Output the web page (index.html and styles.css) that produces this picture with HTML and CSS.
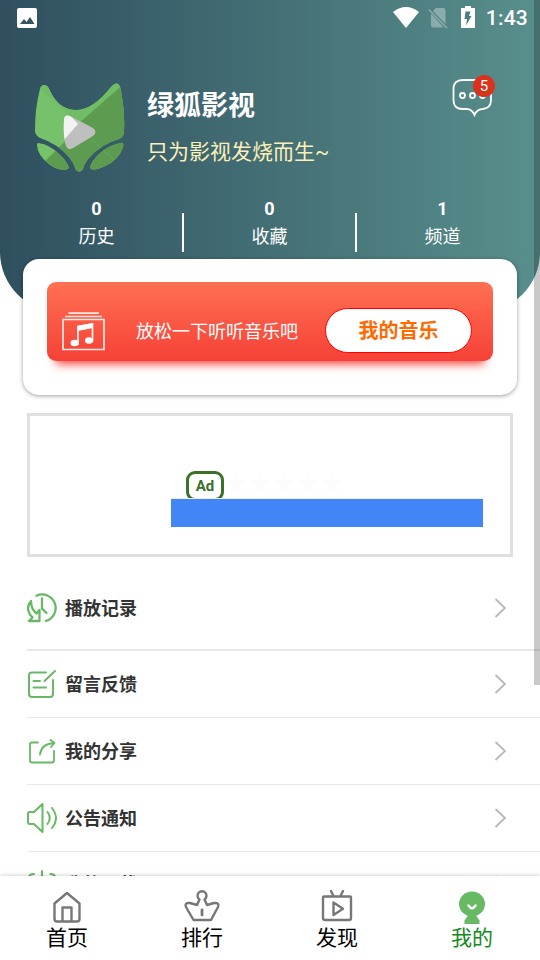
FILE: index.html
```html
<!DOCTYPE html>
<html lang="zh-CN">
<head>
<meta charset="utf-8">
<title>绿狐影视</title>
<link rel="stylesheet" href="styles.css">
</head>
<body>
<div class="app">
  <main class="content">
    <header class="hero">
      <div class="status">
        <svg class="status-pic" width="20" height="20" viewBox="0 0 20 20"><rect width="20" height="20" rx="2" fill="#fff"/><path d="M3 16l4-5 2.500 3 3.500-5 4.500 7z" fill="#35565f"/></svg>
        <svg class="wifi" width="26" height="21" viewBox="0 0 26 21"><path d="M0 5Q13-5 26 5L13 21Z" fill="#fff"/></svg>
        <svg class="sim" width="20" height="21" viewBox="0 0 20 21"><path d="M7.500 0H15.500Q17.500 0 17.500 2V16L5 3ZM3 5.500L15.500 19.500H5q-2 0-2-2z" fill="#fff"/><path d="M.8 1.500L19 20.300" stroke="#fff" stroke-width="1.600"/></svg>
        <svg class="battery" width="14" height="22" viewBox="0 0 14 22"><path d="M4 0h6v2h4v20H0V2h4z" fill="#fff"/><path d="M9.500 5.500H4.500L3.500 13H6L5 19.500L10.500 10H8z" fill="#4b7d80"/></svg>
        <span class="clock">1:43</span>
      </div>
      <div class="profile">
        <svg class="logo" width="90" height="90" viewBox="0 0 90 90">
          <defs>
            <clipPath id="fox"><path d="M5 6Q6 2 9.500 2Q13 2 15 8Q24 27 41 27Q58 27 76 4Q79 0 82 .5Q85 1 86 8Q90 28 89 48Q89 54 84 56Q66 61 54 75Q49 81 48 86Q45 91 41 87Q39 80 34 74Q23 61 5 55Q0 52 0 48Q0 24 5 6ZM3 60Q14 61 24 71Q32 78 34 85Q28 90 15 82Q2 72 2 62Q2 60 3 60ZM86 60Q89 59 88 64Q84 77 70 83Q58 89 55 85Q55 80 64 71Q74 62 86 60Z"/></clipPath>
            <clipPath id="play"><path d="M29 37Q29 31 35 33L58 45Q63 49 58 53L38 65Q33 68 31 63Q28 53 29 37Z"/></clipPath>
          </defs>
          <g clip-path="url(#fox)"><path fill="#76c26b" d="M0 0h90v90H0z"/><path fill="#5d9b51" d="M90 0L8 80L18 90H90Z"/><path d="M5 6L43 42L90 0H0z" fill="#70bd66"/><path fill="#5d9b51" d="M84 5L42 42L90 90V0Z"/><path d="M5 6L90 88" stroke="#7bc56d" stroke-opacity=".35" fill="none"/></g>
          <g clip-path="url(#play)"><path fill="#bfbfbf" d="M28 30h35v40H28z"/><path fill="#f3f3f3" d="M28 30h5l10 11-15 17z"/></g>
        </svg>
        <div class="names"><h1>绿狐影视</h1><p>只为影视发烧而生~</p></div>
        <div class="message">
          <svg width="40" height="38" viewBox="0 0 40 38" fill="none" stroke="#fff" stroke-width="1.800"><path d="M10.500 1H30.500Q39 1 39 10V21Q39 29 31 30Q25 30 22.500 36Q20 30 14.500 30H10.500Q1.500 30 1.500 21V10Q1.500 1 10.500 1Z"/><circle cx="10.500" cy="16.500" r="2.500"/><circle cx="20.500" cy="16.500" r="2.500"/><circle cx="30.500" cy="16.500" r="2.500"/></svg>
          <span class="badge">5</span>
        </div>
      </div>
      <div class="stats">
        <div class="stat"><b>0</b><span>历史</span></div>
        <i></i>
        <div class="stat"><b>0</b><span>收藏</span></div>
        <i></i>
        <div class="stat"><b>1</b><span>频道</span></div>
      </div>
    </header>
    <section class="card">
      <div class="music">
        <svg width="43" height="39" viewBox="0 0 43 39" fill="none" stroke="#ffe9e5" stroke-width="1.700"><path d="M6.500 1.200H37M3 4.500H40M1 7.500H42V37.500H1Z"/><path d="M16 33V14.500L30.500 12V30" stroke="#fff" stroke-width="1.600"/><path d="M15.500 14L31 11v5l-15.500 3z" fill="#fff" stroke="none"/><ellipse cx="12.500" cy="31" rx="4" ry="3.200" fill="#fff" stroke="none"/><ellipse cx="27" cy="28.500" rx="4" ry="3.200" fill="#fff" stroke="none"/></svg>
        <span class="music-text">放松一下听听音乐吧</span>
        <button>我的音乐</button>
      </div>
    </section>
    <section class="ad">
      <div class="ad-line">
        <span class="ad-tag">Ad</span>
        <svg class="stars" width="120" height="24" viewBox="0 0 120 24"><defs><path id="star" d="M12 2.500l2.300 6.600 7 .2-5.500 4.200 2 6.700-5.800-4-5.800 4 2-6.700-5.500-4.200 7-.2z"/></defs><use href="#star"/><use href="#star" x="24"/><use href="#star" x="48"/><use href="#star" x="72"/><use href="#star" x="96"/></svg>
      </div>
      <div class="ad-bar"></div>
    </section>
    <ul class="menu">
      <li class="first">
        <svg width="30" height="32" viewBox="0 0 30 32" fill="none" stroke="#67b963" stroke-width="2.300"><path d="M9.500 3.700A13.500 13.500 0 1 1 19 28.900" stroke-linecap="round"/><path d="M15 6.500v10l4.500 4.500" stroke-linecap="round"/><path d="M4 9Q0 14 1.500 19Q2.500 23 5.500 25.500L2 29H12.500V18L9.500 21.500Q4 17 4 9Z" stroke-linejoin="round"/></svg>
        <span>播放记录</span><svg class="chev" width="12" height="20" viewBox="0 0 12 20"><path d="M1.500 1l9.500 9L1.500 19"/></svg>
      </li>
      <li>
        <svg width="30" height="32" viewBox="0 0 30 32" fill="none" stroke="#67b963" stroke-width="2" stroke-linecap="round"><path d="M19 4.500H5Q2 4.500 2 7.500V26Q2 29 5 29H23Q26 29 26 26V12M17.500 13L28 3M6.500 13H13M6.500 19.500H19"/></svg>
        <span>留言反馈</span><svg class="chev" width="12" height="20" viewBox="0 0 12 20"><path d="M1.500 1l9.500 9L1.500 19"/></svg>
      </li>
      <li>
        <svg width="30" height="32" viewBox="0 0 30 32" fill="none" stroke="#67b963" stroke-width="1.800" stroke-linecap="round" stroke-linejoin="round"><path d="M11 7.500H5Q3 7.500 3 9.500V25.500Q3 27.500 5 27.500H25Q27 27.500 27 25.500V16M13 19.500Q14 9 27 8M23.500 5L27.500 8L24 12"/></svg>
        <span>我的分享</span><svg class="chev" width="12" height="20" viewBox="0 0 12 20"><path d="M1.500 1l9.500 9L1.500 19"/></svg>
      </li>
      <li>
        <svg width="30" height="32" viewBox="0 0 30 32" fill="none" stroke="#67b963" stroke-width="2" stroke-linecap="round" stroke-linejoin="round"><path d="M15.500 2L7 10H3Q1 10 1 12V20Q1 22 3 22H7L15.500 30ZM20.500 10Q25 16 20.500 22M25 6Q33 16 25 26"/></svg>
        <span>公告通知</span><svg class="chev" width="12" height="20" viewBox="0 0 12 20"><path d="M1.500 1l9.500 9L1.500 19"/></svg>
      </li>
      <li class="last">
        <svg width="30" height="32" viewBox="0 0 30 32" fill="none" stroke="#67b963" stroke-width="2" stroke-linecap="round"><path d="M15 2V20M10 15l5 5 5-5M7 5Q1.500 5 1.500 10V24Q1.500 29 6.500 29H23.500Q28.500 29 28.500 24V10Q28.500 5 23.500 5"/></svg>
        <span>我的下载</span><svg class="chev" width="12" height="20" viewBox="0 0 12 20"><path d="M1.500 1l9.500 9L1.500 19"/></svg>
      </li>
    </ul>
    <div class="scrollbar"></div>
  </main>
  <nav class="tabs">
    <a><svg width="36" height="34" viewBox="0 0 36 34"><path d="M18 2L5.500 12.500V28Q5.500 30.500 8 30.500H28Q30.500 30.500 30.500 28V12.500ZM13.500 30V16.500H22.500V30"/></svg>首页</a>
    <a><svg width="36" height="34" viewBox="0 0 36 34"><path d="M15.500 8.500A4.500 4.500 0 1 1 20.500 8.500L23 14L30 12Q36 11.500 34 16L27 29H9.500L2 16Q0 11.500 6 12L13 14Z"/><path d="M18 19v5" stroke-width="2.800"/></svg>排行</a>
    <a><svg width="36" height="34" viewBox="0 0 36 34"><path d="M5 5.500H31Q32 5.500 32 6.500V27Q32 29 30 29H6Q4 29 4 27V6.500Q4 5.500 5 5.500ZM12 0l2.500 5M24 0l-2.500 5M14.500 11.500V24L24 17.700Z"/></svg>发现</a>
    <a class="on"><svg width="36" height="34" viewBox="0 0 36 34"><g fill="#67b963" stroke="none"><ellipse cx="18" cy="13" rx="13" ry="12.500"/><path d="M14 24.500H22L25.500 29.500V33H10.500V29.500Z"/></g><path d="M14.500 14.500Q18 20 21.500 14.500" stroke="#fff"/></svg>我的</a>
  </nav>
</div>
</body>
</html>
```
FILE: styles.css
```css
* { box-sizing: border-box; }
body { margin: 0; font-family: Roboto, "Noto Sans CJK SC", sans-serif; background: #fff; }
svg { display: block; flex: none; }
.app { width: 540px; height: 960px; display: flex; flex-direction: column; overflow: hidden; }
.content { height: 876px; flex: none; overflow: hidden; position: relative; }
.hero { height: 312px; border-radius: 0 0 60px 60px; background: linear-gradient(90deg, #2f4f5f, #446f75 50%, #588f8c); color: #fff; }
.status { height: 36px; padding: 0 12px 0 17px; display: flex; align-items: center; }
.status-pic { margin-right: auto; }
.wifi { margin-bottom: 1px; }
.sim { margin-left: 9px; opacity: .33; }
.battery { margin-left: 13px; margin-bottom: 2px; }
.clock { margin-left: 11px; font-size: 21px; font-weight: 500; line-height: 38px; letter-spacing: .2px; }
.profile { height: 164px; padding: 46px 48px 0 35px; display: flex; align-items: flex-start; }
.names { margin-left: 22px; flex: 1; }
h1 { margin: 6px 0 0; font-size: 27px; line-height: 36px; font-weight: 700; }
.names p { margin: 13px 0 0; font-size: 21px; line-height: 30px; color: #fbf0b9; }
.logo { margin-top: 1px; }
.message { position: relative; margin-top: -3px; }
.badge { position: absolute; left: 21px; top: -4px; width: 22px; height: 22px; border-radius: 50%; background: #d9331c; font-size: 15px; line-height: 23px; text-align: center; }
.stats { display: flex; padding: 0 11px; align-items: flex-start; }
.stat { width: 171px; display: flex; flex-direction: column; align-items: center; font-size: 18px; }
.stat b { line-height: 18px; font-weight: 700; }
.stat span { line-height: 26px; margin-top: 6px; }
.stats i { width: 2px; height: 39px; margin-top: 13px; background: #fff; }
.card { position: relative; margin: -53px 23px 0; height: 136px; padding: 23px 24px; border-radius: 16px; background: #fff; box-shadow: 0 1px 4px rgba(0,0,0,.38); }
.music { height: 79px; padding: 26px 21px 0 15px; border-radius: 9px; display: flex; align-items: flex-start; background: linear-gradient(#ff7052, #f64137); box-shadow: 0 12px 9px -9px #f64137; }
.music svg { margin-top: 4px; }
.music-text { margin-left: 31px; font-size: 18px; line-height: 48px; color: #fff; }
.music button { margin-left: auto; width: 147px; height: 45px; border: 1px solid #f00; border-radius: 23px; background: #fff; color: #ff6a00; font: 700 20px/42px Roboto, "Noto Sans CJK SC", sans-serif; padding: 0; }
.ad { margin: 18px 27px 0; height: 144px; border: 3px solid #e0e0e0; padding: 55px 27px 0 141px; }
.ad-line { height: 28px; display: flex; padding-left: 15px; overflow: hidden; border-bottom: 1px solid #eee; }
.ad-tag { width: 38px; height: 30px; flex: none; border: 3px solid #3d702b; border-radius: 9px; font-size: 15px; line-height: 24px; font-weight: 700; color: #3d702b; text-align: center; }
.stars { fill: #fcfcfc; }
.ad-bar { height: 28px; background: #4285f6; }
.menu { list-style: none; margin: 10px 0 0 27px; padding: 0; }
.menu li { height: 67px; border-bottom: 1px solid #e8e8e8; display: flex; align-items: center; padding-right: 34px; font-size: 18px; font-weight: 700; color: #333; }
.menu .first { height: 84px; border-bottom-width: 2px; }
.menu span { margin-left: 8px; line-height: 26px; padding-top: 2px; flex: 1; }
.menu .last span { padding-top: 0; }
.chev { fill: none; stroke: #b8b8b8; stroke-width: 1.8; }
.scrollbar { position: absolute; right: 0; top: 0; width: 6px; height: 685px; background: rgba(0,0,0,.21); }
.tabs { position: relative; height: 84px; display: flex; background: #fff; box-shadow: 0 -1px 4px rgba(0,0,0,.16); }
.tabs a { flex: 1; display: flex; flex-direction: column; align-items: center; padding: 15px 1px 0 0; font-size: 21px; line-height: 28px; color: #000; }
.tabs a.on { color: #158a1c; }
.tabs svg { margin-bottom: -1px; overflow: visible; fill: none; stroke: #777; stroke-width: 2.4; stroke-linejoin: round; stroke-linecap: round; }
```
